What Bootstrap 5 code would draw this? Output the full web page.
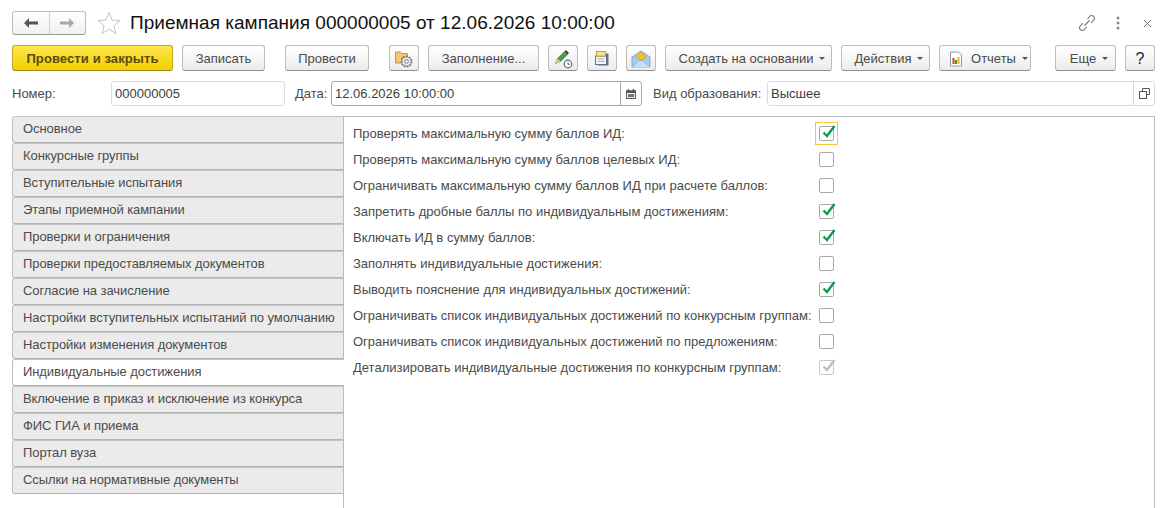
<!DOCTYPE html>
<html lang="ru">
<head>
    <meta charset="UTF-8">
    <meta name="viewport" content="width=device-width, initial-scale=1.0">
    <title>Приемная кампания</title>
    <link href="https://cdn.jsdelivr.net/npm/bootstrap@5.3.3/dist/css/bootstrap.min.css" rel="stylesheet">
    <style>
        html, body { height: 508px; overflow: hidden; }
        body { background: #fff; color: #4b4b4b; font-family: "Liberation Sans", Arial, sans-serif; font-size: 13px; letter-spacing: 0; }
        .page { padding: 11px 19px 0 12px; height: 508px; }

        /* title row */
        .title_row { height: 24px; }
        .nav_arrows { width: 74px; height: 24px; border: 1px solid #bdbdbd; border-bottom-color: #9a9a9a; border-radius: 3px; background: linear-gradient(#fff, #f0f0f0); }
        .nav_arrows span { flex: 1 1 0; }
        .nav_arrows span + span { border-left: 1px solid #d0d0d0; }
        .page_title { font-size: 19px; color: #111; letter-spacing: .02px; line-height: 24px; margin-left: 9px; }
        .star { margin-left: 11px; }

        /* command bar */
        .cmd_bar { margin-top: 10px; height: 26px; gap: 9px; }
        .btn.cmd { height: 26px; padding: 1px 0 0; font-size: 13px; letter-spacing: 0; color: #4b4b4b; border: 1px solid #bcbcbc; border-bottom-color: #8f8f8f; border-radius: 3px; background: linear-gradient(#fff, #ececec); display: flex; align-items: center; justify-content: center; flex: none; }
        .btn.cmd_main { width: 161px; font-weight: 700; letter-spacing: .1px; color: #5a4a10; border-color: #c2a526; border-bottom-color: #a08a1c; background: linear-gradient(#fde64b, #f2cf00); }
        .caret_d { width: 0; height: 0; border: 3px solid transparent; border-top: 3px solid #555; border-bottom: 0; margin-left: 5px; position: relative; left: 1px; }
        .btn.has_caret { padding-left: 6px; }
        .w_rec { width: 83px; }
        .w_post { width: 84px; margin-left: 11px; }
        .w_icon { width: 30px; }
        .w_icon_first { margin-left: 11px; }
        .w_fill { width: 111px; }
        .w_base { width: 167px; }
        .w_act { width: 89px; }
        .w_rep { width: 92px; }
        .w_more { width: 61px; margin-left: 15px; }

        /* header fields */
        .fields { margin-top: 10px; height: 25px; }
        .field_label { flex: none; padding-top: 1px; }
        .lbl_num { width: 99px; }
        .lbl_date { width: 46px; padding-left: 10px; }
        .lbl_kind { width: 125px; padding-left: 11px; }
        .fld { height: 25px; border: 1px solid #dcdcdc; border-radius: 3px; background: #fff; color: #3d3d3d; padding: 0 3px; line-height: 24px; }
        .fld_num { width: 174px; }
        .fld_date { width: 311px; border-color: #a9a9a9; }
        .fld_kind { width: 388px; }
        .fld_btn { width: 21px; height: 23px; flex: none; border-left: 1px solid #d4d4d4; }
        .fld_date .fld_btn { border-left-color: #a9a9a9; }
        .fld .px-1 { padding-left: 3px !important; }

        /* tabs + panel */
        .main_area { margin-top: 10px; height: 392px; }
        .side_tabs { width: 331px; flex: none; }
        .side_tabs .tab_item { height: 27px; line-height: 24px; padding-left: 10px; letter-spacing: -.08px; background: #ebebeb; color: #4b4b4b; border: 1px solid #bcbcbc; border-top-color: #c4c4c4; border-right: 0; border-bottom-color: #b4b4b4; border-radius: 3px 0 0 3px; white-space: nowrap; }
        .side_tabs .tab_item.active { background: #fff; border-right: 0; position: relative; z-index: 2; margin-right: -1px; }
        .tab_panel { flex: 1 1 auto; border: 1px solid #bcbcbc; border-bottom: 0; padding: 3px 0 0 9px; }
        .check_row { height: 26px; }
        .check_label { width: 466px; flex: none; white-space: nowrap; letter-spacing: 0; padding-top: 1px; }
        .check_box { width: 15px; height: 15px; flex: none; border: 1px solid #a8a8a8; border-radius: 2px; background: #fff; position: relative; }
        .check_box svg { position: absolute; left: 1px; top: -3px; }
        .check_box.disabled { border-color: #c6c6c6; }
        .check_box.focused::after { content: ""; position: absolute; inset: -5px; border: 1px solid #f2c83c; }
    </style>
</head>

<body>
<div class="page d-flex flex-column">

    <!-- Title -->
    <div class="title_row d-flex align-items-center">
        <div class="nav_arrows d-flex">
            <span class="d-flex align-items-center justify-content-center">
                <svg width="16" height="12" viewBox="0 0 16 12"><path d="M1 6l5-5v3.500h9v3H6V11z" fill="#555"/></svg>
            </span>
            <span class="d-flex align-items-center justify-content-center">
                <svg width="16" height="12" viewBox="0 0 16 12"><path d="M15 6l-5-5v3.500H1v3h9V11z" fill="#a8a8a8"/></svg>
            </span>
        </div>
        <svg class="star" width="24" height="24" viewBox="0 0 24 24"><path d="M12 1.500l3 7.500 8 .6-6.100 5.100 1.900 7.800L12 18.300l-6.800 4.200 1.900-7.800L1 9.600 9 9z" fill="#fff" stroke="#c4c4c4"/></svg>
        <div class="page_title">Приемная кампания 000000005 от 12.06.2026 10:00:00</div>
        <div class="ms-auto d-flex align-items-center">
            <svg width="18" height="18" viewBox="0 0 18 18" fill="none" stroke="#777" stroke-width="1.100"><path d="M6.500 11.500l5-5M9.500 5l2.300-2.700c1-1 2.900-1 3.800 0s1 2.800 0 3.800L13 9M8.500 13l-2.300 2.700c-1 1-2.900 1-3.800 0s-1-2.800 0-3.800L5 9"/></svg>
            <svg style="margin-left:20px" width="4" height="14" viewBox="0 0 4 14" fill="#8a8a8a"><circle cx="2" cy="2" r="1.500"/><circle cx="2" cy="7" r="1.500"/><circle cx="2" cy="12" r="1.500"/></svg>
            <svg style="margin-left:22px;margin-right:2px" width="11" height="11" viewBox="0 0 11 11" stroke="#777" stroke-width="1"><path d="M2 2l7 7M9 2l-7 7"/></svg>
        </div>
    </div>

    <!-- Command bar -->
    <div class="cmd_bar d-flex">
        <button type="button" class="btn cmd cmd_main">Провести и закрыть</button>
        <button type="button" class="btn cmd w_rec">Записать</button>
        <button type="button" class="btn cmd w_post">Провести</button>
        <button type="button" class="btn cmd w_icon w_icon_first">
            <svg width="20" height="20" viewBox="0 0 20 20"><path d="M1.500 14V3h5l1 1.500h6V8H8v6z" fill="#f4c873" stroke="#c89a3e"/><circle cx="12.500" cy="12.500" r="5" fill="#e8e8e8" stroke="#777" stroke-width="1.800" stroke-dasharray="2 .8"/><circle cx="12.500" cy="12.500" r="1.800" fill="#fff" stroke="#777"/></svg>
        </button>
        <button type="button" class="btn cmd w_fill">Заполнение...</button>
        <button type="button" class="btn cmd w_icon">
            <svg width="20" height="20" viewBox="0 0 20 20"><path d="M2.500 14.500l2-5 7-7 3 3-7 7z" fill="#4aa04a" stroke="#2f7d32" stroke-width=".6"/><path d="M2.500 14.500l2-5 3 3z" fill="#f1c68a"/><path d="M11.500 2.500l1.500-1.500 3 3-1.500 1.500z" fill="#444"/><circle cx="15" cy="15" r="3.800" fill="#fff" stroke="#5a6b7b" stroke-width="1.200"/><path d="M15 13v2.200h2" fill="none" stroke="#5a6b7b"/></svg>
        </button>
        <button type="button" class="btn cmd w_icon">
            <svg width="20" height="20" viewBox="0 0 20 20"><rect x="6" y="4.500" width="10.500" height="12" fill="#5d7488"/><rect x="3.500" y="7" width="11" height="8.500" fill="#f4f7fa" stroke="#5d7488"/><rect x="4.500" y="2.500" width="9" height="4.500" fill="#fbe58a" stroke="#c39f2e"/><path d="M5.500 10h7M5.500 12.500h7" stroke="#9db0c0"/></svg>
        </button>
        <button type="button" class="btn cmd w_icon">
            <svg width="20" height="20" viewBox="0 0 20 20"><path d="M1 8l9-6 9 6v10H1z" fill="#a8cdf0" stroke="#82acd6"/><path d="M4.500 8L10 3.500 15.500 8 10 11z" fill="#f7c21c" stroke="#d79f10" stroke-width=".6"/><path d="M1 18l7-6.500h4l7 6.500" fill="#c4def6" stroke="#82acd6" stroke-width=".8"/></svg>
        </button>
        <button type="button" class="btn cmd has_caret w_base">Создать на основании<span class="caret_d"></span></button>
        <button type="button" class="btn cmd has_caret w_act">Действия<span class="caret_d"></span></button>
        <button type="button" class="btn cmd has_caret w_rep">
            <svg class="me-2" width="14" height="16" viewBox="0 0 14 16"><path d="M1.500 1h8l3 3v11h-11z" fill="#fff" stroke="#8a9aa8"/><rect x="3.500" y="7" width="2" height="6" fill="#d93a2b"/><rect x="6" y="9" width="2" height="4" fill="#2d9a42"/><rect x="8.500" y="6" width="2" height="7" fill="#e8b11d"/></svg>Отчеты<span class="caret_d"></span>
        </button>
        <button type="button" class="btn cmd has_caret w_more">Еще<span class="caret_d"></span></button>
        <button type="button" class="btn cmd w_icon"><b class="fw-normal fs-6 text-dark">?</b></button>
    </div>

    <!-- Header fields -->
    <div class="fields d-flex align-items-center">
        <div class="field_label lbl_num">Номер:</div>
        <div class="fld fld_num">000000005</div>
        <div class="field_label lbl_date">Дата:</div>
        <div class="fld fld_date d-flex p-0">
            <div class="flex-grow-1 px-1">12.06.2026 10:00:00</div>
            <div class="fld_btn d-flex align-items-center justify-content-center">
                <svg width="10" height="10" viewBox="0 0 11 11" fill="#555"><path d="M0 1.500h11V11H0zM1 4.500V10h9V4.500z" fill-rule="evenodd"/><rect x="2" y="0" width="1.500" height="2.500"/><rect x="7.500" y="0" width="1.500" height="2.500"/><rect x="2" y="5.500" width="7" height="3.500" fill="#777"/></svg>
            </div>
        </div>
        <div class="field_label lbl_kind">Вид образования:</div>
        <div class="fld fld_kind d-flex p-0">
            <div class="flex-grow-1 px-1">Высшее</div>
            <div class="fld_btn d-flex align-items-center justify-content-center">
                <svg width="11" height="11" viewBox="0 0 11 11" fill="none" stroke="#555"><path d="M3.500 3.500v-3h7v6h-3"/><rect x=".5" y="3.500" width="7" height="7" /></svg>
            </div>
        </div>
    </div>

    <!-- Tabs and panel -->
    <div class="main_area d-flex">
        <div class="side_tabs d-flex flex-column">
            <div class="tab_item">Основное</div>
            <div class="tab_item">Конкурсные группы</div>
            <div class="tab_item">Вступительные испытания</div>
            <div class="tab_item">Этапы приемной кампании</div>
            <div class="tab_item">Проверки и ограничения</div>
            <div class="tab_item">Проверки предоставляемых документов</div>
            <div class="tab_item">Согласие на зачисление</div>
            <div class="tab_item">Настройки вступительных испытаний по умолчанию</div>
            <div class="tab_item">Настройки изменения документов</div>
            <div class="tab_item active">Индивидуальные достижения</div>
            <div class="tab_item">Включение в приказ и исключение из конкурса</div>
            <div class="tab_item">ФИС ГИА и приема</div>
            <div class="tab_item">Портал вуза</div>
            <div class="tab_item">Ссылки на нормативные документы</div>
        </div>
        <div class="tab_panel" id="checkPanel"></div>
    </div>
</div>

<script>
    const checkRows = [
        ["Проверять максимальную сумму баллов ИД:", "focused"],
        ["Проверять максимальную сумму баллов целевых ИД:", ""],
        ["Ограничивать максимальную сумму баллов ИД при расчете баллов:", ""],
        ["Запретить дробные баллы по индивидуальным достижениям:", "on"],
        ["Включать ИД в сумму баллов:", "on"],
        ["Заполнять индивидуальные достижения:", ""],
        ["Выводить пояснение для индивидуальных достижений:", "on"],
        ["Ограничивать список индивидуальных достижений по конкурсным группам:", ""],
        ["Ограничивать список индивидуальных достижений по предложениям:", ""],
        ["Детализировать индивидуальные достижения по конкурсным группам:", "disabled"]
    ];
    const tick = (color) => '<svg width="16" height="16" viewBox="0 0 16 16"><path d="M2.500 8.500l3.500 3.500 7.500-10" fill="none" stroke="' + color + '" stroke-width="2.400"/></svg>';
    document.getElementById("checkPanel").innerHTML = checkRows.map(function (row) {
        const state = row[1];
        let cls = "check_box";
        let mark = "";
        if (state === "focused") { cls += " focused"; mark = tick("#0a9a50"); }
        if (state === "on") { mark = tick("#0a9a50"); }
        if (state === "disabled") { cls += " disabled"; mark = tick("#bdbdbd"); }
        return '<div class="check_row d-flex align-items-center"><div class="check_label">' + row[0] + '</div><div class="' + cls + '">' + mark + '</div></div>';
    }).join("");
</script>
<script src="https://cdn.jsdelivr.net/npm/bootstrap@5.3.3/dist/js/bootstrap.bundle.min.js"></script>
</body>
</html>
